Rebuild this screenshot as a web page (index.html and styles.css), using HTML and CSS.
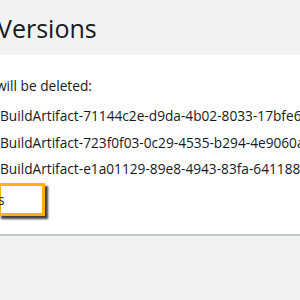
FILE: index.html
```html
<!DOCTYPE html>
<html>
<head>
<meta charset="utf-8">
<link rel="stylesheet" href="styles.css">
</head>
<body>
<div class="modal">
  <header class="modal-header">
    <h2 class="title">Versions</h2>
  </header>
  <section class="modal-body">
    <p class="intro">will be deleted:</p>
    <ul class="list">
      <li>BuildArtifact-71144c2e-d9da-4b02-8033-17bfe6c1a2b3</li>
      <li>BuildArtifact-723f0f03-0c29-4535-b294-4e9060a7d1e2</li>
      <li>BuildArtifact-e1a01129-89e8-4943-83fa-6411884c0d5e</li>
    </ul>
    <div class="highlight"><span class="hl-text">s</span></div>
  </section>
  <footer class="modal-footer"></footer>
</div>
</body>
</html>
```
FILE: styles.css
```css
html, body {
  margin: 0;
  padding: 0;
  width: 300px;
  height: 300px;
  overflow: hidden;
  background: #ffffff;
}
.modal {
  font-family: "Open Sans", "Noto Sans", sans-serif;
  color: #16191f;
  display: flex;
  flex-direction: column;
  height: 300px;
}
.modal-header {
  background: #f1f2f2;
  height: 55px;
  display: flex;
  align-items: flex-start;
}
.title {
  margin: 0 0 0 -3px;
  padding-top: 11px;
  font-weight: 400;
  font-size: 25px;
  line-height: 34px;
  color: #16191f;
}
.modal-body {
  background: #fff;
  height: 179px;
  padding-top: 20px;
  box-sizing: border-box;
}
.intro {
  margin: 0 0 0 -4px;
  font-size: 13.7px;
  line-height: 22px;
}
.list {
  list-style: none;
  margin: 6px 0 0 0;
  padding: 0;
  white-space: nowrap;
}
.list li {
  font-size: 13.7px;
  line-height: 26.5px;
  height: 26.5px;
}
.highlight {
  margin-top: 0;
  width: 41px;
  height: 27px;
  margin-left: -2px;
  border: 3px solid #f7b500;
  box-shadow: 3px 3px 2px rgba(30, 30, 30, 0.85);
  display: flex;
  align-items: center;
}
.hl-text {
  font-size: 13.7px;
  margin-left: -3px;
}
.modal-footer {
  flex: 1;
  background: #f1f2f2;
  border-top: 2px solid #c3c7c8;
}
```
